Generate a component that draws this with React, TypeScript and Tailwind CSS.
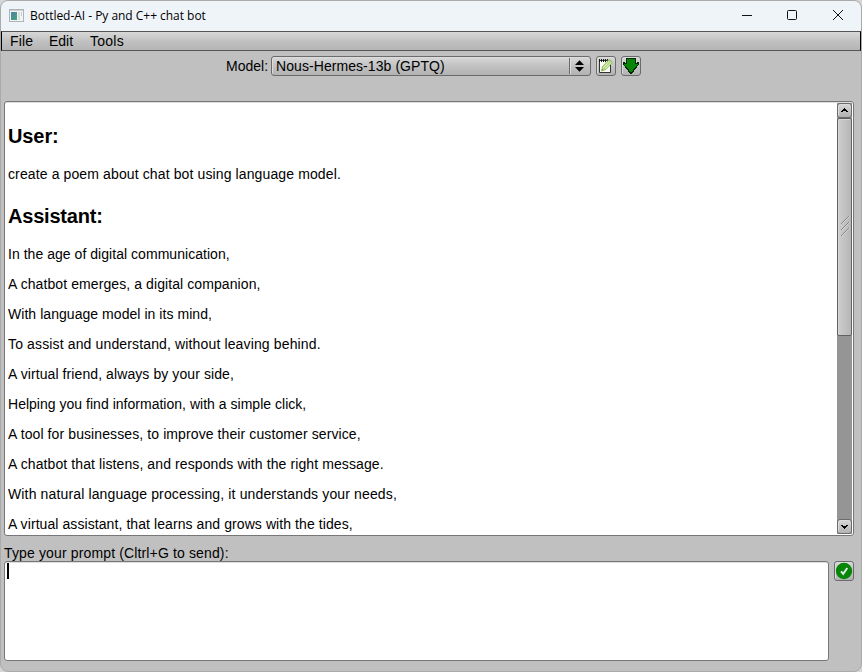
import React from 'react';

const LINES: { text: string; tracking: string }[] = [
  { text: 'In the age of digital communication,', tracking: 'tracking-[0.04px]' },
  { text: 'A chatbot emerges, a digital companion,', tracking: 'tracking-[0.09px]' },
  { text: 'With language model in its mind,', tracking: 'tracking-[0.05px]' },
  { text: 'To assist and understand, without leaving behind.', tracking: 'tracking-[0.14px]' },
  { text: 'A virtual friend, always by your side,', tracking: 'tracking-[0.09px]' },
  { text: 'Helping you find information, with a simple click,', tracking: 'tracking-[0.02px]' },
  { text: 'A tool for businesses, to improve their customer service,', tracking: 'tracking-[0.1px]' },
  { text: 'A chatbot that listens, and responds with the right message.', tracking: 'tracking-[0.1px]' },
  { text: 'With natural language processing, it understands your needs,', tracking: 'tracking-[0.14px]' },
  { text: 'A virtual assistant, that learns and grows with the tides,', tracking: 'tracking-[0.08px]' },
];

const BUTTON =
  'flex shrink-0 items-center justify-center rounded-[3px] border border-[#6b6b6b] bg-linear-to-b from-[#d8d8d8] via-[#c4c4c4] to-[#b2b2b2] shadow-[inset_1px_1px_0_#dcdcdc]';

function TitleBar() {
  return (
    <header className="flex h-[30px] shrink-0 items-center bg-[#eff4f9] pl-2 font-['Open_Sans','Noto_Sans',sans-serif] text-xs text-black">
      <svg width="15" height="13" viewBox="0 0 15 13" className="relative -top-px mr-[6px] shrink-0">
        <defs>
          <linearGradient id="appIcon" x1="0" y1="0" x2="1" y2="1">
            <stop offset="0" stopColor="#4f7fae" />
            <stop offset="1" stopColor="#43a76d" />
          </linearGradient>
        </defs>
        <rect x=".5" y=".5" width="14" height="12" fill="#f3f4f5" stroke="#aeb3b7" />
        <path d="M1 1.5h13" stroke="#cdd1d4" />
        <rect x="2" y="3" width="6" height="8" fill="url(#appIcon)" />
        <rect x="9" y="3" width="2" height="8" fill="#d8dddf" />
        <rect x="12" y="3" width="1" height="4" fill="#c6ccd0" />
      </svg>
      <span className="whitespace-nowrap tracking-[-0.03px]">Bottled-AI - Py and C++ chat bot</span>
      <div className="ml-auto flex h-full items-center">
        <svg width="121" height="30" viewBox="0 0 121 30" fill="none" stroke="#111" strokeWidth="1">
          <path d="M2 14.5h10" />
          <rect x="47.5" y="9.5" width="9" height="9" rx="1" />
          <path d="M93 9l10 10M103 9l-10 10" />
        </svg>
      </div>
    </header>
  );
}

function MenuBar() {
  return (
    <nav className="flex h-5 shrink-0 items-center border border-[#555] border-x-black bg-linear-to-b from-[#d8d8d8] via-[#c1c1c1] to-[#b5b5b5] pl-2 text-sm leading-none">
      <span className="w-[39px] tracking-[0.15px]">File</span>
      <span className="w-[41px]">Edit</span>
      <span className="tracking-[0.25px]">Tools</span>
    </nav>
  );
}

function ModelRow() {
  return (
    <div className="flex h-[50px] shrink-0 items-start pt-[5px] pl-[225px] text-sm">
      <span className="w-[45px] shrink-0 leading-5">Model:</span>
      <div className="flex h-5 w-[320px] shrink-0 items-center rounded-[3px] border border-[#6b6b6b] bg-linear-to-b from-[#d8d8d8] via-[#c2c2c2] to-[#b2b2b2] pl-1 shadow-[inset_1px_1px_0_#dcdcdc]">
        <span className="flex-1 tracking-[0.07px]">Nous-Hermes-13b (GPTQ)</span>
        <span className="h-[16px] w-px bg-[#6b6b6b]" />
        <span className="h-[16px] w-px bg-[#dedede]" />
        <svg width="19" height="18" viewBox="0 0 19 18">
          <path d="M4 8L8.5 3.3 13 8zM4 10L8.5 14.7 13 10z" />
        </svg>
      </div>
      <div className={`${BUTTON} ml-[5px] h-5 w-5`}>
        <svg width="16" height="16" viewBox="0 0 16 16">
          <path d="M1.5 2.500h11v12h-11z" fill="#fdfdf8" stroke="#33362c" />
          <path d="M1.5 1v3M3.500 1v3M5.500 1v3M7.500 1v3M9.500 1v3" stroke="#151713" />
          <path d="M3.500 13l1-4.500 6.500-7 3.500 2.800-6.500 7.200z" fill="#b4d884" stroke="#8fb95e" strokeWidth=".8" />
          <path d="M5.500 9.500l5.500-6M7.500 10.500l5.500-6" stroke="#edf7d8" strokeWidth=".8" />
          <path d="M3.500 13l.6-2.500 1.600 1.400z" fill="#7da34e" />
        </svg>
      </div>
      <div className={`${BUTTON} ml-[5px] h-5 w-5`}>
        <svg width="18" height="18" viewBox="0 0 18 18" shapeRendering="crispEdges">
          <path
            d="M4 1h10v5h1V5h2v3h-1v1h-1v2h-1v1h-1v1h-1v2h-1v1h-1v1H8v-1H7v-1H6v-2H5v-1H4v-1H3V9H2V8H1V5h2v1h1z"
            fill="#022b03"
          />
          <path d="M5 2h8v5h3v1h-1v1h-1v1h-1v1h-1v1h-1v2h-1v1H8v-1H7v-2H6v-1H5v-1H4V9H3V8H2V7h3z" fill="#078507" />
        </svg>
      </div>
    </div>
  );
}

function ScrollBar() {
  return (
    <div className="flex w-[15px] shrink-0 flex-col bg-[#959595]">
      <div className={`${BUTTON} h-[15px]`}>
        <svg width="9" height="7" viewBox="0 0 9 7">
          <path d="M1 5h2V4h3v1h2V4H7V3H6V2H5V1H4v1H3v1H2v1H1z" />
        </svg>
      </div>
      <div className="flex h-[218px] shrink-0 items-center justify-center rounded-[2px] border border-[#626262] bg-linear-to-r from-[#cecece] via-[#c2c2c2] to-[#b6b6b6] shadow-[inset_1px_1px_0_#d6d6d6]">
        <svg width="11" height="24" viewBox="0 0 11 24" fill="none">
          <path d="M2 9l8-8M2 15l8-8M2 21l8-8" stroke="#858585" />
          <path d="M3 9l8-8M3 15l8-8M3 21l8-8" stroke="#e0e0e0" strokeWidth=".7" />
        </svg>
      </div>
      <div className={`${BUTTON} mt-auto h-[15px]`}>
        <svg width="9" height="7" viewBox="0 0 9 7">
          <path d="M1 2h2v1h3V2h2v1H7v1H6v1H5v1H4V5H3V4H2V3H1z" />
        </svg>
      </div>
    </div>
  );
}

function Line({ text, tracking }: { text: string; tracking: string }) {
  return <p className={`h-[30px] text-sm leading-[30px] whitespace-nowrap ${tracking}`}>{text}</p>;
}

function Conversation() {
  return (
    <main className="mr-[7px] ml-[3px] flex h-[435px] shrink-0 overflow-hidden rounded-[3px] border border-[#777] bg-white p-px shadow-[inset_0_1px_0_#dedede]">
      <div className="min-w-0 flex-1 overflow-hidden pt-[13px] pl-[2px]">
        <h2 className="h-[43px] text-xl leading-10 font-bold tracking-[-0.1px]">User:</h2>
        <Line text="create a poem about chat bot using language model." tracking="tracking-[0.12px]" />
        <h2 className="h-[50px] pt-[7px] text-xl leading-10 font-bold tracking-[-0.2px]">Assistant:</h2>
        {LINES.map((line) => (
          <Line key={line.text} {...line} />
        ))}
      </div>
      <ScrollBar />
    </main>
  );
}

function Prompt() {
  return (
    <section className="ml-[3px] flex shrink-0 flex-col pt-[8px]">
      <label className="h-[17px] text-sm leading-[18px] tracking-[0.14px]">Type your prompt (Cltrl+G to send):</label>
      <div className="flex items-start">
        <div className="h-[100px] w-[825px] rounded-[3px] border border-[#777] bg-white pt-px pl-[2px] shadow-[inset_0_1px_0_#dedede]">
          <div className="h-4 w-[2px] bg-black" />
        </div>
        <div className={`${BUTTON} ml-[5px] h-5 w-5`}>
          <svg width="18" height="18" viewBox="0 0 18 18">
            <circle cx="9" cy="9" r="8.2" fill="#078507" />
            <path d="M6 9.3l2.200 2.600L12.300 6" fill="none" stroke="#dcebdc" strokeWidth="2" />
          </svg>
        </div>
      </div>
    </section>
  );
}

export default function App() {
  return (
    <div className="h-[672px] w-[862px] overflow-hidden bg-[#d5d6d8] font-['Liberation_Sans',Arial,sans-serif] text-black">
      <div className="flex h-[672px] w-[862px] flex-col overflow-hidden rounded-lg border border-[#aaa] bg-[#c0c0c0]">
        <TitleBar />
        <MenuBar />
        <ModelRow />
        <Conversation />
        <Prompt />
      </div>
    </div>
  );
}
